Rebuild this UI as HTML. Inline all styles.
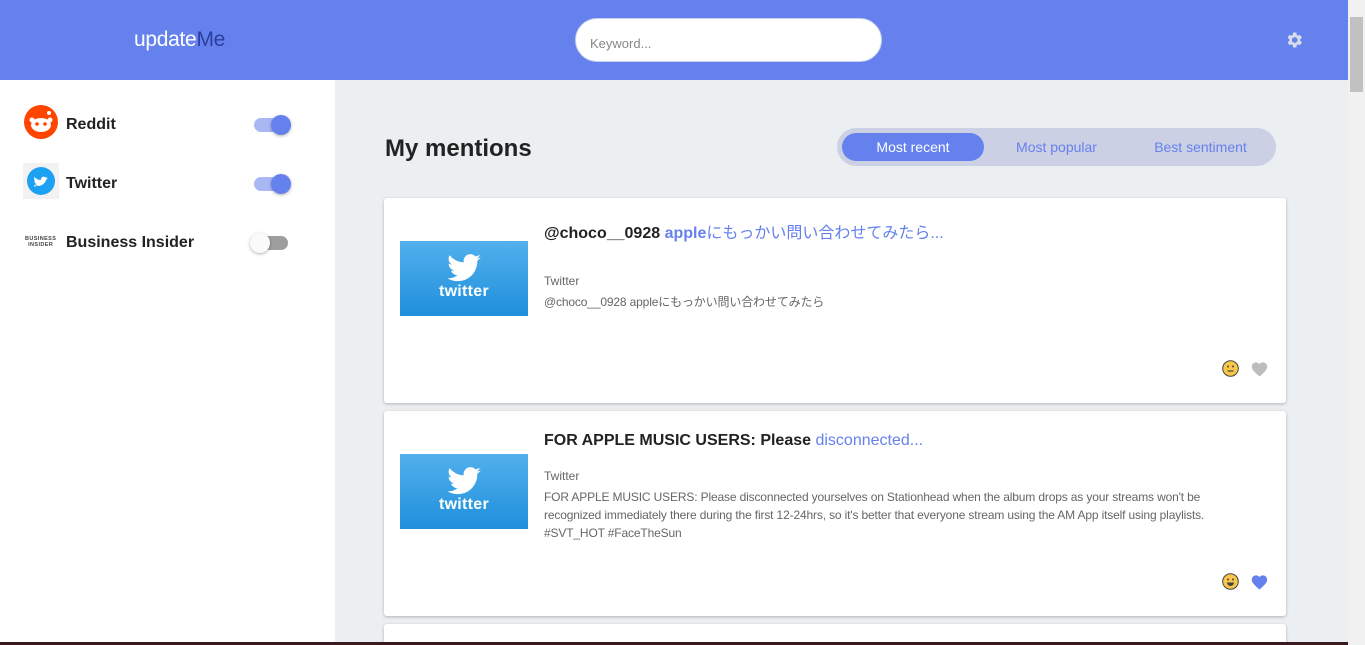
<!DOCTYPE html>
<html><head><meta charset="utf-8"><style>
*{box-sizing:border-box;margin:0;padding:0}
html,body{width:1365px;height:645px;overflow:hidden}
body{font-family:"Liberation Sans","Noto Sans CJK JP",sans-serif;background:#eceff1;position:relative}
.hdr{position:absolute;left:0;top:0;width:1348px;height:80px;background:#6581ee}
.logo{position:absolute;left:134px;top:28px;font-size:21px;color:#fff;letter-spacing:-0.3px}
.logo span{color:#2c3e9e}
.search{position:absolute;left:575px;top:18px;width:307px;height:44px;border-radius:22px;background:#fff;border:1px solid #c9d0f0}
.search div{position:absolute;left:14px;top:17px;font-size:13px;color:#888}
.side{position:absolute;left:0;top:80px;width:335px;height:565px;background:#fff}
.row{position:absolute;left:23px;height:36px;width:280px}
.row .lbl{position:absolute;left:43px;top:12px;font-size:16px;font-weight:bold;color:#222}
.tg{position:absolute;left:231px;top:14px;width:34px;height:14px;border-radius:7px;background:#a9b8f5}
.tg i{position:absolute;right:-3px;top:-3px;width:20px;height:20px;border-radius:50%;background:#6581ee;box-shadow:0 1px 3px rgba(0,0,0,.3)}
.tg.off{background:#9e9e9e}
.tg.off i{left:-4px;right:auto;background:#fafafa}
h1{position:absolute;left:385px;top:135px;font-size:24px;font-weight:bold;color:#222}
.seg{position:absolute;left:837px;top:128px;width:439px;height:38px;border-radius:19px;background:#cbd0e4}
.seg div{position:absolute;top:5px;height:28px;line-height:28px;font-size:14px;color:#6581ee;text-align:center}
.seg .a{left:5px;width:142px;background:#6581ee;color:#fff;border-radius:14px}
.card{position:absolute;left:384px;width:902px;background:#fff;border-radius:3px;box-shadow:0 1px 3px rgba(0,0,0,.25)}
.tw{position:absolute;left:16px;width:128px;height:75px;background:linear-gradient(#52b0ec,#1f8fdc)}
.tw b{position:absolute;left:0;right:0;top:42px;text-align:center;color:#fff;font-size:16px;font-weight:bold;letter-spacing:.3px}
.tw svg{position:absolute;left:47px;top:13px}
.ttl{position:absolute;left:160px;font-size:16px;font-weight:bold;color:#222;white-space:nowrap}
.ttl span{color:#6581ee}
.ttl span.n{font-weight:normal}
.src{position:absolute;left:160px;font-size:12px;color:#666}
.body{position:absolute;left:160px;font-size:12px;color:#666;line-height:18px;white-space:nowrap;letter-spacing:-.15px}
.emo{position:absolute;left:838px}
.heart{position:absolute;left:866px}
.sb{position:absolute;right:0;top:0;width:17px;height:645px;background:#f1f1f1}
.sb .th{position:absolute;left:2px;top:17px;width:13px;height:75px;background:#c1c1c1}
</style></head><body>
<div class="hdr">
<div class="logo">update<span>Me</span></div>
<div class="search"><div>Keyword...</div></div>
<svg style="position:absolute;left:1284px;top:30px" width="20" height="20" viewBox="0 0 24 24"><path fill="#d9dcea" d="M19.4 13a7.5 7.5 0 0 0 0-2l2.1-1.6-2-3.5-2.5 1a7.3 7.3 0 0 0-1.700-1L14.900 3h-4l-.4 2.9a7.3 7.3 0 0 0-1.700 1l-2.5-1-2 3.5L6.400 11a7.5 7.5 0 0 0 0 2l-2.100 1.600 2 3.500 2.500-1a7.3 7.3 0 0 0 1.700 1l.4 2.900h4l.4-2.900a7.3 7.300 0 0 0 1.700-1l2.500 1 2-3.500zM12.900 15.500a3.500 3.500 0 1 1 0-7 3.500 3.500 0 0 1 0 7z"/></svg>
</div>
<div class="side">
<div class="row" style="top:24px">
<svg width="36" height="36" viewBox="0 0 36 36"><circle cx="18" cy="18" r="17" fill="#ff4500"/><ellipse cx="18" cy="21" rx="10" ry="7" fill="#fff"/><circle cx="14" cy="20" r="1.800" fill="#ff4500"/><circle cx="22" cy="20" r="1.800" fill="#ff4500"/><circle cx="26" cy="9" r="2" fill="#fff"/><circle cx="9" cy="16" r="2.500" fill="#fff"/><circle cx="27" cy="16" r="2.500" fill="#fff"/></svg>
<div class="lbl">Reddit</div><div class="tg"><i></i></div></div>
<div class="row" style="top:83px">
<svg width="36" height="36" viewBox="0 0 36 36"><rect width="36" height="36" fill="#f2f2f2"/><circle cx="18" cy="18" r="14" fill="#1da1f2"/><path d="M11 22c4 2 10 1 12-5l2-2-2 .5 1.500-1.500-2 .5c-2-2-5 0-4.500 2.500-3 0-5-1.500-6.500-3-1 2 0 3.500 1 4l-1.200-.3c0 1.500 1 2.500 2.300 2.800-.6.2-1.200.2-1.700 0 .4 1.200 1.500 1.800 2.600 1.900-1.200 1-2.600 1.300-3.500 1.100z" fill="#fff"/></svg>
<div class="lbl">Twitter</div><div class="tg"><i></i></div></div>
<div class="row" style="top:142px">
<div style="position:absolute;left:2px;top:14px;font-size:5.500px;font-weight:bold;color:#444;line-height:6px;text-align:center;letter-spacing:.4px">BUSINESS<br>INSIDER</div>
<div class="lbl">Business Insider</div><div class="tg off"><i></i></div></div>
</div>
<h1>My mentions</h1>
<div class="seg"><div class="a">Most recent</div><div style="left:149px;width:141px">Most popular</div><div style="left:293px;width:141px">Best sentiment</div></div>

<div class="card" style="top:198px;height:205px">
<div class="tw" style="top:43px"><svg width="34" height="28" viewBox="0 0 24 20"><path fill="#fff" d="M24 2.400a9.800 9.800 0 0 1-2.800.8A4.900 4.900 0 0 0 23.300.5a9.900 9.900 0 0 1-3.100 1.200A4.900 4.900 0 0 0 11.800 6 14 14 0 0 1 1.700.9a4.900 4.900 0 0 0 1.500 6.600A4.900 4.900 0 0 1 1 6.900a4.900 4.900 0 0 0 3.900 4.800 4.900 4.900 0 0 1-2.200.1 4.900 4.900 0 0 0 4.600 3.400A9.900 9.900 0 0 1 0 17.200 14 14 0 0 0 7.500 19.400c9.100 0 14-7.500 14-14v-.6A10 10 0 0 0 24 2.400z"/></svg><b>twitter</b></div>
<div class="ttl" style="top:21px">@choco__0928 <span>apple<span class="n">にもっかい問い合わせてみたら...</span></span></div>
<div class="src" style="top:76px">Twitter</div>
<div class="body" style="top:95px">@choco__0928 appleにもっかい問い合わせてみたら</div>
<svg class="emo" style="top:162px" width="17" height="17" viewBox="0 0 17 17"><circle cx="8.500" cy="8.500" r="7.800" fill="#f8c74a" stroke="#444" stroke-width="1"/><circle cx="6" cy="6.500" r="1" fill="#444"/><circle cx="11" cy="6.500" r="1" fill="#444"/><path d="M5.500 11h6" stroke="#444" stroke-width="1.200"/></svg>
<svg class="heart" style="top:162px" width="19" height="17" viewBox="0 0 24 22"><path fill="#bdbdbd" d="M12 21.400 10.500 20C5.400 15.400 2 12.300 2 8.500 2 5.400 4.400 3 7.500 3c1.700 0 3.400.8 4.500 2.100C13.100 3.800 14.800 3 16.500 3 19.600 3 22 5.400 22 8.500c0 3.800-3.400 6.900-8.500 11.500z"/></svg>
</div>

<div class="card" style="top:411px;height:205px">
<div class="tw" style="top:43px"><svg width="34" height="28" viewBox="0 0 24 20"><path fill="#fff" d="M24 2.400a9.800 9.800 0 0 1-2.800.8A4.900 4.900 0 0 0 23.300.5a9.900 9.900 0 0 1-3.100 1.200A4.900 4.900 0 0 0 11.800 6 14 14 0 0 1 1.700.9a4.900 4.900 0 0 0 1.500 6.600A4.900 4.900 0 0 1 1 6.900a4.900 4.900 0 0 0 3.900 4.800 4.900 4.900 0 0 1-2.200.1 4.900 4.900 0 0 0 4.600 3.400A9.900 9.900 0 0 1 0 17.200 14 14 0 0 0 7.500 19.400c9.100 0 14-7.500 14-14v-.6A10 10 0 0 0 24 2.400z"/></svg><b>twitter</b></div>
<div class="ttl" style="top:21px">FOR APPLE MUSIC USERS: Please <span class="n" style="font-weight:normal">disconnected...</span></div>
<div class="src" style="top:58px">Twitter</div>
<div class="body" style="top:77px">FOR APPLE MUSIC USERS: Please disconnected yourselves on Stationhead when the album drops as your streams won't be<br>recognized immediately there during the first 12-24hrs, so it's better that everyone stream using the AM App itself using playlists.<br>#SVT_HOT #FaceTheSun</div>
<svg class="emo" style="top:162px" width="17" height="17" viewBox="0 0 17 17"><circle cx="8.500" cy="8.500" r="7.800" fill="#f8c74a" stroke="#444" stroke-width="1"/><circle cx="6" cy="6.500" r="1" fill="#444"/><circle cx="11" cy="6.500" r="1" fill="#444"/><path d="M5 9.500h7a3.500 3.500 0 0 1-7 0z" fill="#444"/></svg>
<svg class="heart" style="top:162px" width="19" height="17" viewBox="0 0 24 22"><path fill="#6581ee" d="M12 21.400 10.500 20C5.400 15.400 2 12.300 2 8.500 2 5.400 4.400 3 7.500 3c1.700 0 3.400.8 4.500 2.100C13.100 3.800 14.800 3 16.500 3 19.600 3 22 5.400 22 8.500c0 3.800-3.400 6.900-8.500 11.500z"/></svg>
</div>
<div class="card" style="top:624px;height:21px;border-radius:3px 3px 0 0"></div>
<div class="sb"><div class="th"></div></div>
<div style="position:absolute;left:0;top:642px;width:1348px;height:3px;background:#3a1a1e"></div>
</body></html>
